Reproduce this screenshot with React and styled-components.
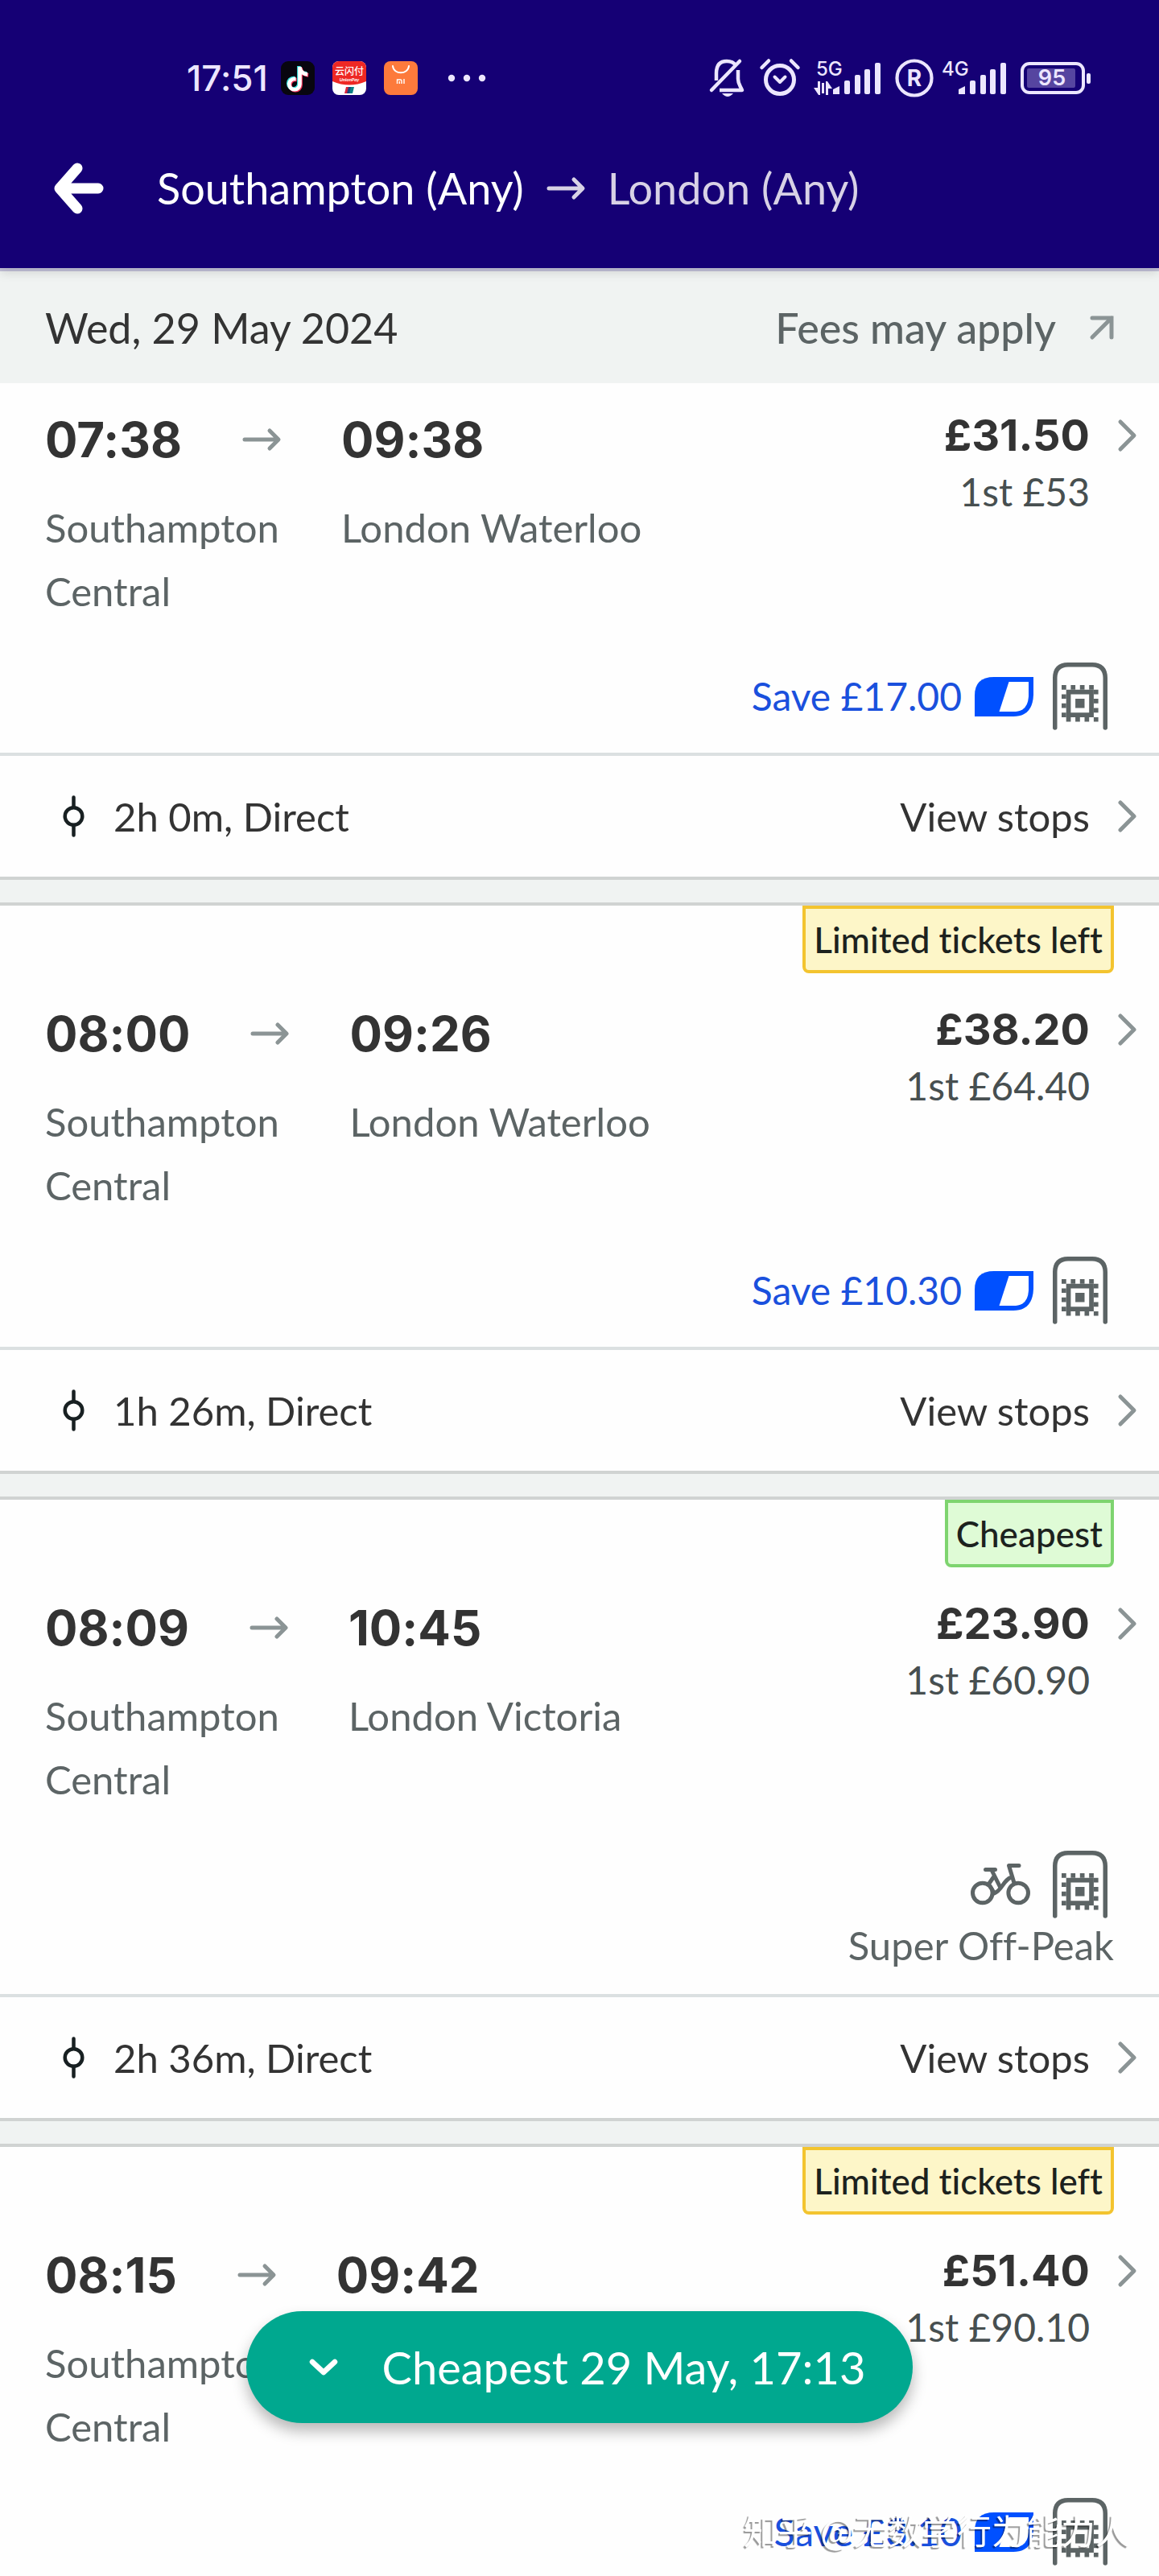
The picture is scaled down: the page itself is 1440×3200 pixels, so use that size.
import React, { useState } from 'react';
import styled, { createGlobalStyle } from 'styled-components';

const colors = {
  navy: '#150075',
  status: '#ece6ff',
  text: '#333333',
  muted: '#5c6465',
  firstClass: '#474f50',
  icon: '#8b9495',
  band: '#f0f3f2',
  bandLine: '#d0d3d2',
  divider: '#dbe0e1',
  blue: '#0050ff',
  blueText: '#1a50dd',
  teal: '#00a88f'
};

const badgeColors = {
  limited: { background: '#fdf6c8', border: '#f3c42f' },
  cheapest: { background: '#dffbd6', border: '#7ed46f' }
};

const GlobalStyle = createGlobalStyle`
  * {
    box-sizing: border-box;
  }

  body {
    margin: 0;
    background-color: #fefefe;
    color: ${colors.text};
    font-family: Lato, 'Noto Sans CJK SC', sans-serif;
    font-variant-ligatures: none;
  }

  button {
    border: 0;
    padding: 0;
    background: none;
    color: inherit;
    font: inherit;
    text-align: left;
    cursor: pointer;
  }

  svg {
    display: block;
    flex: none;
    overflow: visible;
  }
`;

const Screen = styled.div`
  display: flex;
  flex-direction: column;
  height: 100vh;
  overflow: hidden;
`;

const Header = styled.header`
  position: relative;
  z-index: 1;
  flex: none;
  background-color: ${colors.navy};
  color: #ffffff;
  box-shadow: 0 4px 0 rgba(21, 0, 117, 0.2), 0 6px 12px rgba(0, 0, 0, 0.12);
`;

const StatusBar = styled.div`
  display: flex;
  justify-content: space-between;
  padding: 60px 84px 0 232px;
  height: 134px;
  color: ${colors.status};
`;

const StatusGroup = styled.div`
  display: flex;
  align-items: center;
  gap: ${props => props.$gap}px;
`;

const Clock = styled.span`
  font-family: Inter, sans-serif;
  font-size: 44px;
  font-weight: 500;
  line-height: 52px;
`;

const Toolbar = styled.div`
  display: flex;
  align-items: center;
  padding: 0 56px 0 66px;
  height: 199px;
`;

const Route = styled.h1`
  display: flex;
  align-items: center;
  gap: 28px;
  margin: 0 0 0 66px;
  font-size: 54px;
  font-weight: 400;
  line-height: 64px;
`;

const Destination = styled.span`
  color: #d8d2e6;
`;

const DateBar = styled.div`
  display: flex;
  flex: none;
  align-items: center;
  justify-content: space-between;
  padding: 4px 56px 0;
  height: 143px;
  background-color: ${colors.band};
  font-size: 52px;
  line-height: 64px;
`;

const FeesLink = styled.a`
  display: flex;
  align-items: center;
  gap: 42px;
  color: ${colors.muted};
  font-weight: 500;
  text-decoration: none;
`;

const TripList = styled.ul`
  flex: 1;
  min-height: 0;
  margin: 0;
  padding: 0;
  overflow: hidden;
  list-style: none;
`;

const Band = styled.div`
  height: 36px;
  border: solid ${colors.bandLine};
  border-width: 4px 0;
  background-color: ${colors.band};
`;

const BadgeRow = styled.div`
  display: flex;
  justify-content: flex-end;
  padding-right: 56px;
  height: 89px;
`;

const Badge = styled.span`
  height: 84px;
  padding: 0 10px;
  border: 4px solid ${props => badgeColors[props.$kind].border};
  border-radius: 0 0 8px 8px;
  background-color: ${props => badgeColors[props.$kind].background};
  color: #1c221e;
  font-size: 44px;
  font-weight: 500;
  line-height: 76px;
`;

const TripButton = styled.button`
  display: block;
  width: 100%;
  padding: 30px 28px 28px 56px;
`;

const TripTop = styled.span`
  display: flex;
  align-items: flex-start;
  justify-content: space-between;
`;

const Times = styled.span`
  display: grid;
  grid-template-columns: max-content 48px max-content;
  column-gap: 75px;
  row-gap: 30px;
  align-items: center;
`;

const Time = styled.span`
  font-family: Inter, sans-serif;
  font-size: 60px;
  font-weight: 700;
  line-height: 80px;
`;

const TimesArrow = styled.span`
  color: ${colors.icon};
`;

const Station = styled.span`
  align-self: start;
  color: ${colors.muted};
  font-size: 49px;
  line-height: 79px;
`;

// Takes its width from the time and arrow above, so long names wrap.
const Origin = styled(Station)`
  grid-column: 1 / span 2;
  width: 0;
  min-width: 100%;
`;

const PriceBox = styled.span`
  display: flex;
  gap: 34px;
`;

const Prices = styled.span`
  display: flex;
  flex-direction: column;
  align-items: flex-end;
  font-size: 48px;
  line-height: 70px;
`;

const Price = styled.strong`
  font-family: Inter, sans-serif;
  font-size: 54px;
  font-weight: 700;
`;

const FirstClass = styled.span`
  color: ${colors.firstClass};
`;

const ChevronBox = styled.span`
  display: flex;
  align-items: center;
  height: 70px;
`;

const Perks = styled.span`
  display: flex;
  flex-direction: column;
  align-items: flex-end;
  margin-top: 49px;
  padding-right: 28px;
`;

const PerkIcons = styled.span`
  display: flex;
  align-items: center;
  gap: 24px;
  padding-right: 8px;
`;

const Saving = styled.span`
  display: flex;
  align-items: center;
  gap: 16px;
  color: ${colors.blueText};
  font-size: 48px;
  line-height: 64px;
`;

const TicketType = styled.span`
  color: ${colors.muted};
  font-size: 49px;
  line-height: 66px;
`;

const StopsButton = styled.button`
  display: flex;
  align-items: center;
  width: 100%;
  height: 154px;
  padding: 0 28px 0 78px;
  border-top: 4px solid ${colors.divider};
  font-size: 49px;
  line-height: 64px;
`;

const Duration = styled.span`
  flex: 1;
  margin-left: 36px;
`;

const ViewStops = styled.span`
  margin-right: 34px;
`;

const CheapestPill = styled.button`
  position: fixed;
  right: 0;
  bottom: 190px;
  left: 0;
  display: flex;
  align-items: center;
  gap: 54px;
  width: fit-content;
  height: 139px;
  margin: 0 auto;
  padding: 0 58px 0 78px;
  border-radius: 70px;
  background-color: ${colors.teal};
  box-shadow: 0 10px 18px rgba(0, 0, 0, 0.28);
  color: #ffffff;
  font-size: 56px;
  line-height: 70px;
`;

const Watermark = styled.div`
  position: fixed;
  right: 36px;
  bottom: 28px;
  color: #ffffff;
  font-family: 'Noto Sans CJK SC', sans-serif;
  font-size: 43px;
  line-height: 60px;
  text-shadow: -2px 2px 1px rgba(0, 0, 0, 0.4);
  pointer-events: none;
`;

const NoteAppIcon = () => (
  <svg width="42" height="42" viewBox="0 0 42 42" fill="none">
    <rect width="42" height="42" rx="9" fill="#08060f" />
    <g strokeWidth="4.6">
      <path d="M22.4 6v21.6a6.6 6.6 0 1 1-6.6-6.6h1.6M22.4 7c.8 5 4.6 8 9.6 8.4" stroke="#35e0dc" />
      <path d="M24.6 8v21.6a6.6 6.6 0 1 1-6.6-6.6h1.6M24.6 9c.8 5 4.6 8 9.6 8.4" stroke="#f5325a" />
      <path d="M23.5 7v21.6a6.6 6.6 0 1 1-6.6-6.6h1.6M23.5 8c.8 5 4.6 8 9.6 8.4" stroke="#ffffff" />
    </g>
  </svg>
);

const PayAppIcon = () => (
  <svg width="42" height="42" viewBox="0 0 42 42">
    <rect width="42" height="42" rx="8" fill="#ffffff" />
    <path d="M8 0h26a8 8 0 0 1 8 8v17q-21 9-42 0V8a8 8 0 0 1 8-8z" fill="#ee2824" />
    <text x="21" y="17" fill="#ffffff" fontFamily="Noto Sans CJK SC" fontSize="12" fontWeight="500" textAnchor="middle">
      云闪付
    </text>
    <text x="21" y="25" fill="#ffffff" fontFamily="Lato" fontSize="6" fontStyle="italic" fontWeight="700" textAnchor="middle">
      UnionPay
    </text>
    <path d="M17 32h4l-2 8h-4z" fill="#d8233c" />
    <path d="M20 32h4l-2 8h-4z" fill="#17457c" />
    <path d="M23 32h4l-2 8h-4z" fill="#0c7f86" />
  </svg>
);

const StoreAppIcon = () => (
  <svg width="42" height="42" viewBox="0 0 42 42" fill="none" stroke="#ffffff">
    <rect width="42" height="42" rx="8" fill="#fd7a3c" stroke="none" />
    <path d="M11 6c1 11 19 11 20 0" strokeWidth="2" strokeLinecap="round" />
    <path d="M16.5 28v-5h4q1.500 0 1.500 1.500V28M19.300 25v3M25 22v6" strokeWidth="1.4" />
  </svg>
);

const MoreIcon = () => (
  <svg width="64" height="12" viewBox="0 0 64 12" fill="currentColor">
    <circle cx="20" cy="6" r="4.2" />
    <circle cx="39" cy="6" r="4.2" />
    <circle cx="58" cy="6" r="4.2" />
  </svg>
);

const MutedBellIcon = () => (
  <svg width="45" height="48" viewBox="0 0 45 48" fill="none" stroke="currentColor" strokeWidth="4.5">
    <path d="M9 27V18C9 7 14 3 22 3c5 0 9 2 11 5M36 14v11c0 7 3 9 5 14H13" strokeLinejoin="round" />
    <path d="M3 39 38 3" strokeLinecap="round" />
    <path d="M16 43h14q-7 8-14 0z" fill="currentColor" stroke="none" />
  </svg>
);

const AlarmIcon = () => (
  <svg width="50" height="48" viewBox="0 0 50 48" fill="none" stroke="currentColor" strokeLinecap="round">
    <circle cx="25" cy="26" r="17.5" strokeWidth="5" />
    <path d="M2.5 11 11 2.5M47.5 11 39 2.5" strokeWidth="4.5" />
    <path d="M18.5 22.5 25 29l6.5-6.5" strokeWidth="4" strokeLinejoin="round" />
  </svg>
);

const SignalIcon = ({ label, active }) => (
  <svg width="82" height="48" viewBox="0 0 82 48" fill="currentColor">
    <text x="2" y="21" fontFamily="Inter" fontSize="24" fontWeight="500">
      {label}
    </text>
    {active && (
      <path d="M4 28h3v17H5L-1 36h5zM9 30h3v13H9zM14 45V28h2l6 9h-5v8z" />
    )}
    <path d="M23 44v-6l8-4v10z" />
    <rect x="37" y="27" width="7" height="17" rx="2" />
    <rect x="50" y="20" width="7" height="24" rx="2" />
    <rect x="62" y="13" width="7" height="31" rx="2" />
    <rect x="75" y="5" width="7" height="39" rx="2" />
  </svg>
);

const RoamingIcon = () => (
  <svg width="48" height="48" viewBox="0 0 48 48" fill="currentColor">
    <circle cx="24" cy="24" r="21.5" fill="none" stroke="currentColor" strokeWidth="4.2" />
    <text x="24" y="34" fontFamily="Inter" fontSize="28" fontWeight="700" textAnchor="middle">
      R
    </text>
  </svg>
);

const BatteryIcon = () => (
  <svg width="88" height="40" viewBox="0 0 88 40" fill="currentColor">
    <rect x="2" y="2" width="76" height="36" rx="9" fill="none" stroke="currentColor" strokeWidth="4" />
    <rect x="8" y="8" width="60" height="24" rx="2" fill="#5645a0" />
    <rect x="82" y="14" width="5" height="13" rx="2" />
    <text x="39" y="29" fontFamily="Inter" fontSize="27" fontWeight="600" textAnchor="middle">
      95
    </text>
  </svg>
);

const BackIcon = () => (
  <svg width="63" height="64" viewBox="0 0 63 64" fill="none" stroke="currentColor" strokeWidth="13">
    <path d="M30 7 8 32l22 25M10 32h46" strokeLinecap="round" strokeLinejoin="round" />
  </svg>
);

const ArrowIcon = () => (
  <svg width="48" height="28" viewBox="0 0 48 28" fill="none" stroke="currentColor" strokeWidth="5">
    <path d="M3 14h41M34 3l11 11-11 11" strokeLinecap="round" strokeLinejoin="round" />
  </svg>
);

const ExternalIcon = () => (
  <svg width="30" height="30" viewBox="0 0 30 30" fill="none" stroke={colors.icon} strokeWidth="5">
    <path d="M3 3h24v24M27 3 3 27" strokeLinecap="round" />
  </svg>
);

const ChevronIcon = () => (
  <svg width="24" height="40" viewBox="0 0 24 40" fill="none" stroke={colors.icon} strokeWidth="5">
    <path d="m4 3 17 17L4 37" strokeLinecap="round" strokeLinejoin="round" />
  </svg>
);

const DownIcon = () => (
  <svg width="36" height="22" viewBox="0 0 36 22" fill="none" stroke="currentColor" strokeWidth="6.5">
    <path d="m4 4 14 13L32 4" strokeLinecap="round" strokeLinejoin="round" />
  </svg>
);

const StopIcon = () => (
  <svg width="27" height="52" viewBox="0 0 27 52" fill="none" stroke="#182022" strokeWidth="4.5">
    <circle cx="13.5" cy="26" r="10.8" />
    <path d="M13.5 2.5v12M13.5 37v12.5" strokeLinecap="round" />
  </svg>
);

const RailcardIcon = () => (
  <svg width="73" height="49" viewBox="0 0 73 49">
    <path d="M0 49V23Q0 0 24 0h49v22q-1 27-25 27z" fill={colors.blue} />
    <path d="M42.5 6H67v18q-1 18-16 19H30.5z" fill="#ffffff" />
  </svg>
);

const MobileTicketIcon = () => (
  <svg width="68" height="84" viewBox="0 0 68 84" fill={colors.muted}>
    <path
      d="M2.75 81V19Q3 3 19 2.75h30Q65 3 65.25 19v62"
      fill="none"
      stroke={colors.muted}
      strokeWidth="5.5"
      strokeLinecap="round"
    />
    <g transform="translate(11 28) scale(5.7)">
      <path d="M0 0h1v1H0zM2 0h1v1H2zM4 0h1v1H4zM6 0h1v1H6zM0 2h1v1H0zM0 4h1v1H0zM0 6h1v1H0z" />
      <path d="M7 1h1v1H7zM7 3h1v1H7zM7 5h1v1H7zM7 7h1v1H7zM1 7h1v1H1zM3 7h1v1H3zM5 7h1v1H5z" />
      <path d="M1 1h6v6H1zM2 2v4h4V2zM3 3h2v2H3z" fillRule="evenodd" />
    </g>
  </svg>
);

const BikeIcon = () => (
  <svg width="78" height="52" viewBox="0 0 78 52" fill="none" stroke={colors.muted} strokeWidth="5">
    <circle cx="14.8" cy="36.5" r="12.3" />
    <circle cx="59.2" cy="36.5" r="12.3" />
    <path
      d="M18.5 7.5h12M26 8l11 22M29 16l-7 10M60 2.5H47.5L54 24M29 37c10-3 12-18 22-20M24 28l5 8"
      strokeLinecap="round"
      strokeLinejoin="round"
    />
  </svg>
);

const trips = [
  {
    departs: '07:38',
    arrives: '09:38',
    to: 'London Waterloo',
    price: '£31.50',
    first: '£53',
    saving: '£17.00',
    duration: '2h 0m'
  },
  {
    departs: '08:00',
    arrives: '09:26',
    to: 'London Waterloo',
    price: '£38.20',
    first: '£64.40',
    saving: '£10.30',
    duration: '1h 26m',
    badge: 'limited'
  },
  {
    departs: '08:09',
    arrives: '10:45',
    to: 'London Victoria',
    price: '£23.90',
    first: '£60.90',
    bike: true,
    ticket: 'Super Off-Peak',
    duration: '2h 36m',
    badge: 'cheapest'
  },
  {
    departs: '08:15',
    arrives: '09:42',
    price: '£51.40',
    first: '£90.10',
    saving: '£3.10',
    badge: 'limited'
  }
];

const badgeLabels = {
  limited: 'Limited tickets left',
  cheapest: 'Cheapest'
};

const Trip = ({ trip, first, onSelect }) => (
  <li>
    {!first && <Band />}
    {trip.badge && (
      <BadgeRow>
        <Badge $kind={trip.badge}>{badgeLabels[trip.badge]}</Badge>
      </BadgeRow>
    )}
    <TripButton type="button" onClick={onSelect}>
      <TripTop>
        <Times>
          <Time>{trip.departs}</Time>
          <TimesArrow>
            <ArrowIcon />
          </TimesArrow>
          <Time>{trip.arrives}</Time>
          <Origin>Southampton Central</Origin>
          {trip.to && <Station>{trip.to}</Station>}
        </Times>
        <PriceBox>
          <Prices>
            <Price>{trip.price}</Price>
            <FirstClass>1st {trip.first}</FirstClass>
          </Prices>
          <ChevronBox>
            <ChevronIcon />
          </ChevronBox>
        </PriceBox>
      </TripTop>
      <Perks>
        <PerkIcons>
          {trip.saving && (
            <Saving>
              Save {trip.saving}
              <RailcardIcon />
            </Saving>
          )}
          {trip.bike && <BikeIcon />}
          <MobileTicketIcon />
        </PerkIcons>
        {trip.ticket && <TicketType>{trip.ticket}</TicketType>}
      </Perks>
    </TripButton>
    {trip.duration && (
      <StopsButton type="button">
        <StopIcon />
        <Duration>{trip.duration}, Direct</Duration>
        <ViewStops>View stops</ViewStops>
        <ChevronIcon />
      </StopsButton>
    )}
  </li>
);

export default function App() {
  const [, setSelected] = useState(null);

  return (
    <Screen>
      <GlobalStyle />
      <Header>
        <StatusBar>
          <StatusGroup $gap={22}>
            <StatusGroup $gap={16}>
              <Clock>17:51</Clock>
              <NoteAppIcon />
            </StatusGroup>
            <PayAppIcon />
            <StoreAppIcon />
            <MoreIcon />
          </StatusGroup>
          <StatusGroup $gap={18}>
            <MutedBellIcon />
            <AlarmIcon />
            <SignalIcon label="5G" active />
            <StatusGroup $gap={8}>
              <RoamingIcon />
              <SignalIcon label="4G" />
            </StatusGroup>
            <BatteryIcon />
          </StatusGroup>
        </StatusBar>
        <Toolbar>
          <button type="button" aria-label="Back">
            <BackIcon />
          </button>
          <Route>
            Southampton (Any)
            <Destination>
              <ArrowIcon />
            </Destination>
            <Destination>London (Any)</Destination>
          </Route>
        </Toolbar>
      </Header>
      <DateBar>
        <span>Wed, 29 May 2024</span>
        <FeesLink href="#fees">
          Fees may apply
          <ExternalIcon />
        </FeesLink>
      </DateBar>
      <TripList>
        {trips.map((trip, index) => (
          <Trip
            key={trip.departs}
            trip={trip}
            first={index === 0}
            onSelect={() => setSelected(trip.departs)}
          />
        ))}
      </TripList>
      <CheapestPill type="button">
        <DownIcon />
        Cheapest 29 May, 17:13
      </CheapestPill>
      <Watermark>知乎 @无数学行为能力人</Watermark>
    </Screen>
  );
}
